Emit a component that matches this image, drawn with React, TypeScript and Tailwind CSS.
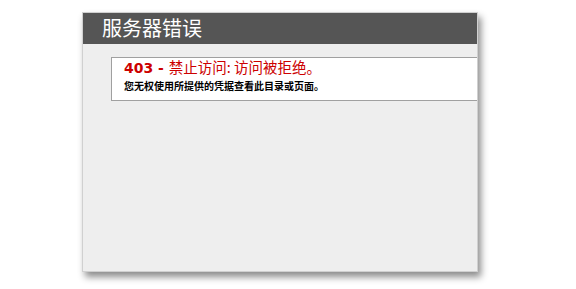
export default function App() {
  return (
    <div className="w-[576px] h-[289px] bg-white overflow-hidden" style={{ fontFamily: '"DejaVu Sans", "Noto Sans CJK SC", sans-serif' }}>
      <div className="ml-[82px] mt-[12px] w-[396px] h-[260px] bg-[#eeeeee] border border-[#d0d0d0] shadow-[3px_5px_7px_rgba(0,0,0,0.45)]">
        <div className="h-[31px] bg-[#555555] pl-[19px] flex items-center">
          <h1 className="text-[20px] leading-none text-white font-normal -mt-[2px]" style={{ fontFamily: '"Noto Sans CJK SC", sans-serif' }}>
            服务器错误
          </h1>
        </div>
        <div className="pt-[13px] pl-[28px]">
          <div className="h-[44px] bg-white border border-[#a0a0a0] border-r-0 pl-[12px]">
            <h2 className="text-[14px] leading-[18px] text-[#cc0000] font-bold">
              403 - <span className="font-normal text-[14.5px]" style={{ fontFamily: '"Noto Sans CJK SC", sans-serif' }}>禁止访问: 访问被拒绝。</span>
            </h2>
            <p className="text-[10px] leading-[16px] mt-[1px] font-bold text-black" style={{ fontFamily: '"Noto Sans CJK SC", sans-serif' }}>
              您无权使用所提供的凭据查看此目录或页面。
            </p>
          </div>
        </div>
      </div>
    </div>
  );
}
